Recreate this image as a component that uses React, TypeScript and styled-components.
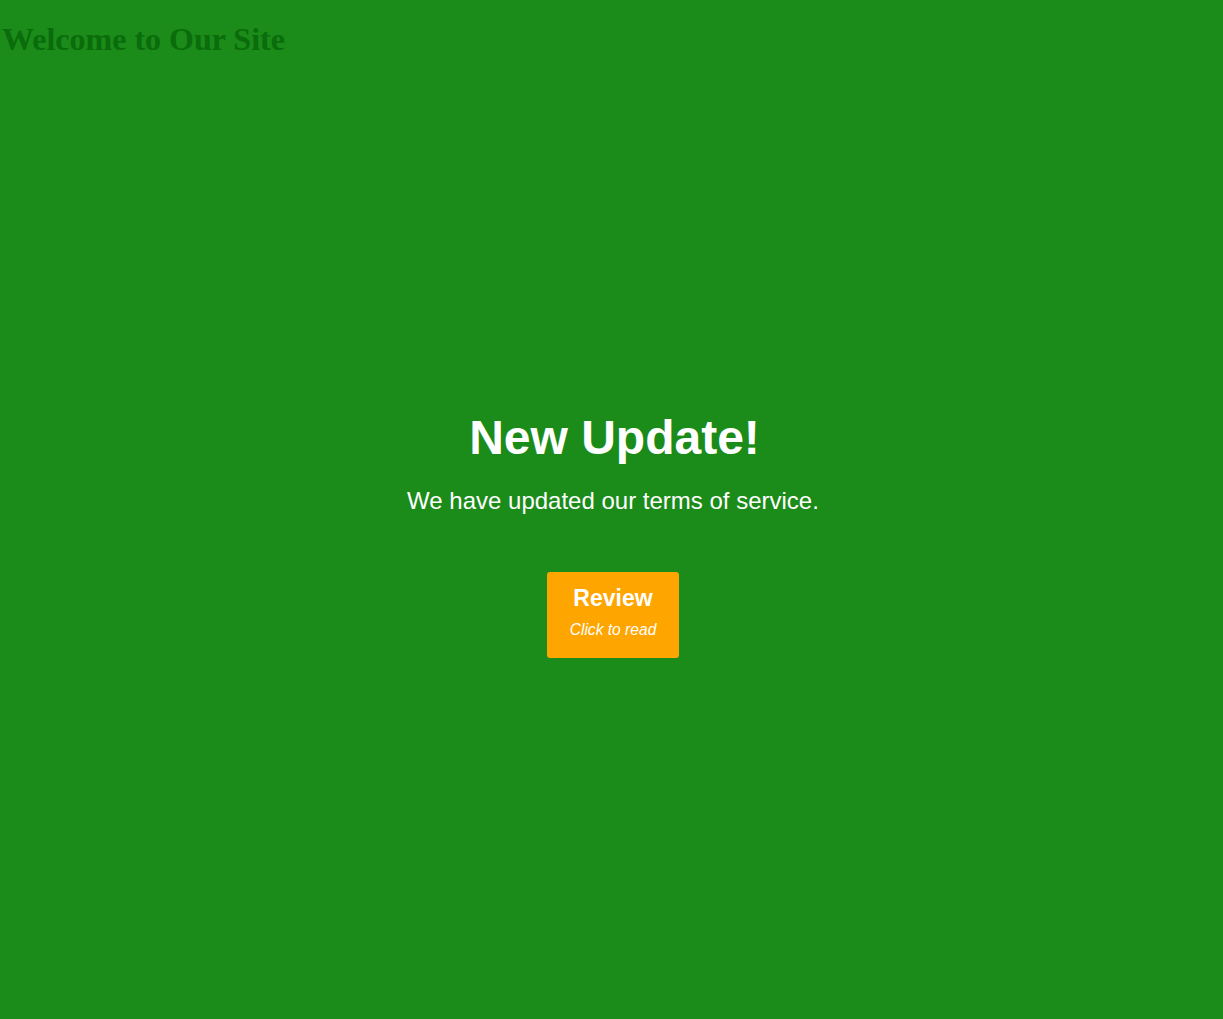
import React from "react";
import styled, { createGlobalStyle } from "styled-components";

const Global = createGlobalStyle`
  html, body {
    margin: 0;
    padding: 0;
    background: #1b8b1a;
  }
  body {
    font-family: "Liberation Serif", "Times New Roman", serif;
    min-height: 1019px;
  }
`;

const Page = styled.div`
  display: flex;
  flex-direction: column;
`;

const SiteTitle = styled.h1`
  margin: 21.44px 0 21.44px 2px;
  font-family: "Liberation Serif", "Times New Roman", serif;
  font-size: 32px;
  font-weight: bold;
  color: #0a6c0a;
`;

const Hero = styled.main`
  min-height: 908px;
  display: flex;
  flex-direction: column;
  align-items: center;
  justify-content: center;
  text-align: center;
  color: #ffffff;
  font-family: "Liberation Sans", Arial, sans-serif;
`;

const Headline = styled.h2`
  margin: 0 0 22px;
  font-size: 48px;
  font-weight: bold;
  padding-left: 6px;
`;

const Lead = styled.p`
  margin: 0 0 57px;
  font-size: 24px;
  padding-left: 3px;
`;

const CtaButton = styled.button`
  display: flex;
  flex-direction: column;
  align-items: center;
  padding: 13px 23px 19px;
  background: #ffa500;
  color: #ffffff;
  border: none;
  border-radius: 3px;
  font-family: "Liberation Sans", Arial, sans-serif;
  cursor: pointer;
  margin-left: 3px;
`;

const CtaLabel = styled.span`
  font-size: 23px;
  font-weight: bold;
  line-height: 26px;
`;

const CtaHint = styled.span`
  margin-top: 10px;
  font-size: 15.6px;
  font-style: italic;
  line-height: 18px;
`;

export default function App() {
  return (
    <>
      <Global />
      <Page>
        <SiteTitle>Welcome to Our Site</SiteTitle>
        <Hero>
          <Headline>New Update!</Headline>
          <Lead>We have updated our terms of service.</Lead>
          <CtaButton>
            <CtaLabel>Review</CtaLabel>
            <CtaHint>Click to read</CtaHint>
          </CtaButton>
        </Hero>
      </Page>
    </>
  );
}
